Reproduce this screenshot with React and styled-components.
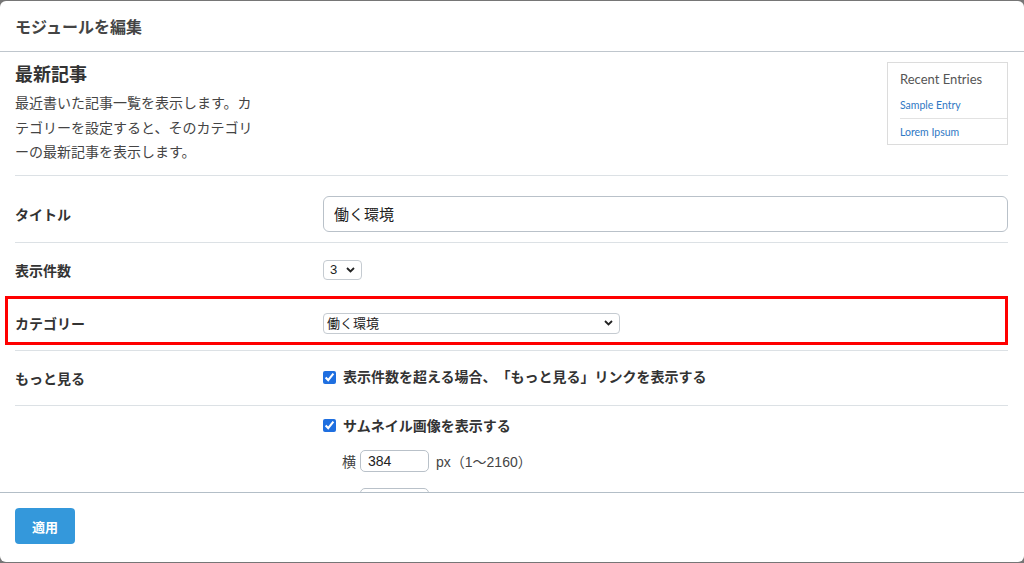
import React from "react";
import styled, { createGlobalStyle } from "styled-components";

const GlobalStyle = createGlobalStyle`
    html, body {
        margin: 0;
        padding: 0;
        background: #767676;
        height: 563px;
        overflow: hidden;
    }
    body {
        font-family: "Liberation Sans", "Noto Sans CJK JP", sans-serif;
        color: #333;
        text-spacing-trim: space-all;
    }
`

const Modal = styled.div`
    margin-top: 1px;
    width: 1024px;
    height: 561px;
    background: #fff;
    border-radius: 6px;
    display: flex;
    flex-direction: column;
    overflow: hidden;
`

const ModalHeader = styled.div`
    height: 50px;
    flex-shrink: 0;
    display: flex;
    align-items: center;
    padding: 0 15px;
    border-bottom: 1px solid #bfc6cd;
    h1{
        margin: 0;
        font-size: 16px;
        font-weight: 700;
        color: #444;
    }
`

const ModalBody = styled.div`
    height: 440px;
    flex-shrink: 0;
    overflow: hidden;
    padding: 0 16px 0 15px;
`

const Intro = styled.div`
    display: flex;
    justify-content: space-between;
    align-items: flex-start;
    padding: 10px 0;
    border-bottom: 1px solid #dce1e5;
    h2{
        margin: 0;
        font-size: 18px;
        line-height: 26px;
        font-weight: 700;
        color: #333;
    }
    p{
        margin: 3px 0 0;
        width: 240px;
        font-size: 14px;
        line-height: 24.5px;
        color: #444;
    }
`

const Preview = styled.div`
    width: 119px;
    border: 1px solid #dcdcdc;
    font-family: Lato, "Open Sans", sans-serif;
    h3{
        margin: 0;
        padding: 8px 12px 0;
        font-size: 13px;
        line-height: 16px;
        font-weight: 400;
        color: #555;
    }
    ul{
        list-style: none;
        margin: 5px 0 0;
        padding: 0 0 0 12px;
    }
    li{
        font-size: 10.5px;
        line-height: 14px;
        padding: 6px 0;
        color: #2f78c4;
    }
    li + li{
        border-top: 1px solid #e2e2e2;
        padding-bottom: 5px;
    }
`

const Row = styled.div`
    display: grid;
    grid-template-columns: 308px 1fr;
    align-items: center;
    padding: ${(props) => props.$pad || "16px 0"};
    border-bottom: 1px solid #dce1e5;
`

const Highlight = styled.div`
    grid-column: 1 / -1;
    display: grid;
    grid-template-columns: 308px 1fr;
    align-items: center;
    margin: -1px 0 5px -10px;
    padding: 14px 0 8px 7px;
    border: 3px solid #ff0000;
`

const Label = styled.div`
    font-size: 14px;
    font-weight: 700;
    color: #333;
`

const TextInput = styled.input`
    box-sizing: border-box;
    width: 100%;
    height: 36px;
    border: 1px solid #b9c1c9;
    border-radius: 6px;
    padding: 0 10px;
    font-family: "Liberation Sans", "Noto Sans CJK JP", sans-serif;
    font-size: 15px;
    color: #222;
    outline: none;
`

const SelectWrap = styled.div`
    position: relative;
    width: ${(props) => props.$w}px;
    height: ${(props) => props.$h}px;
    svg{
        position: absolute;
        right: 7px;
        top: 50%;
        transform: translateY(-50%);
        pointer-events: none;
    }
`

const Select = styled.select`
    appearance: none;
    box-sizing: border-box;
    width: 100%;
    height: 100%;
    border: 1px solid #c5cbd1;
    border-radius: 4px;
    background: #fff;
    padding: 0 0 0 ${(props) => props.$padLeft || 5}px;
    font-family: "Liberation Sans", "Noto Sans CJK JP", sans-serif;
    font-size: 13px;
    color: #222;
    outline: none;
`

const Check = styled.label`
    display: flex;
    align-items: center;
    gap: 7px;
    font-size: 14px;
    font-weight: 700;
    line-height: ${(props) => props.$lh || 19}px;
    color: #333;
    input{
        margin: 0;
        width: 13px;
        height: 13px;
        accent-color: #1f6fe0;
    }
`

const Options = styled.div`
    display: flex;
    flex-direction: column;
`

const SizeRow = styled.div`
    display: flex;
    align-items: center;
    margin-top: ${(props) => props.$gap || 16}px;
    padding-left: 19px;
    font-size: 14px;
    color: #444;
    span{
        width: 18px;
    }
    input{
        box-sizing: border-box;
        width: 69px;
        height: 22px;
        border: 1px solid #b9c1c9;
        border-radius: 5px;
        padding: 0 7px;
        font-family: "Liberation Sans", sans-serif;
        font-size: 14px;
        color: #222;
        outline: none;
    }
    em{
        font-style: normal;
        margin-left: 7px;
    }
`

const ModalFooter = styled.div`
    flex: 1;
    border-top: 1px solid #b3bec7;
    padding: 15px;
`

const ApplyButton = styled.button`
    width: 60px;
    height: 36px;
    border: none;
    border-radius: 4px;
    background: #3498db;
    color: #fff;
    font-family: "Liberation Sans", "Noto Sans CJK JP", sans-serif;
    font-size: 13px;
    font-weight: 700;
`

function Chevron() {
    return (
        <svg width="9" height="6" viewBox="0 0 9 6">
            <path d="M1 1l3.5 3.5L8 1" fill="none" stroke="#222" strokeWidth="1.8" />
        </svg>
    );
}

export default function App() {
    return (
        <>
            <GlobalStyle />
            <Modal>
                <ModalHeader>
                    <h1>モジュールを編集</h1>
                </ModalHeader>
                <ModalBody>
                    <Intro>
                        <div>
                            <h2>最新記事</h2>
                            <p>最近書いた記事一覧を表示します。カテゴリーを設定すると、そのカテゴリーの最新記事を表示します。</p>
                        </div>
                        <Preview>
                            <h3>Recent Entries</h3>
                            <ul>
                                <li>Sample Entry</li>
                                <li>Lorem Ipsum</li>
                            </ul>
                        </Preview>
                    </Intro>
                    <Row $pad="20px 0 10px">
                        <Label>タイトル</Label>
                        <TextInput defaultValue="働く環境" />
                    </Row>
                    <Row $pad="17px 0 16px">
                        <Label>表示件数</Label>
                        <SelectWrap $w={39} $h={20}>
                            <Select $padLeft={6} defaultValue="3">
                                <option>1</option>
                                <option>2</option>
                                <option>3</option>
                                <option>4</option>
                                <option>5</option>
                            </Select>
                            <Chevron />
                        </SelectWrap>
                    </Row>
                    <Row $pad="0">
                        <Highlight>
                            <Label>カテゴリー</Label>
                            <SelectWrap $w={297} $h={21}>
                                <Select $padLeft={3} defaultValue="働く環境">
                                    <option>働く環境</option>
                                </Select>
                                <Chevron />
                            </SelectWrap>
                        </Highlight>
                    </Row>
                    <Row $pad="17px 0">
                        <Label>もっと見る</Label>
                        <Check>
                            <input type="checkbox" defaultChecked />
                            表示件数を超える場合、「もっと見る」リンクを表示する
                        </Check>
                    </Row>
                    <Row $pad="10px 0 0">
                        <div />
                        <Options>
                            <Check $lh={20}>
                                <input type="checkbox" defaultChecked />
                                サムネイル画像を表示する
                            </Check>
                            <SizeRow $gap={14}>
                                <span>横</span>
                                <input defaultValue="384" />
                                <em>px（1〜2160）</em>
                            </SizeRow>
                            <SizeRow $gap={16}>
                                <span />
                                <input defaultValue="" />
                            </SizeRow>
                        </Options>
                    </Row>
                </ModalBody>
                <ModalFooter>
                    <ApplyButton>適用</ApplyButton>
                </ModalFooter>
            </Modal>
        </>
    );
}
